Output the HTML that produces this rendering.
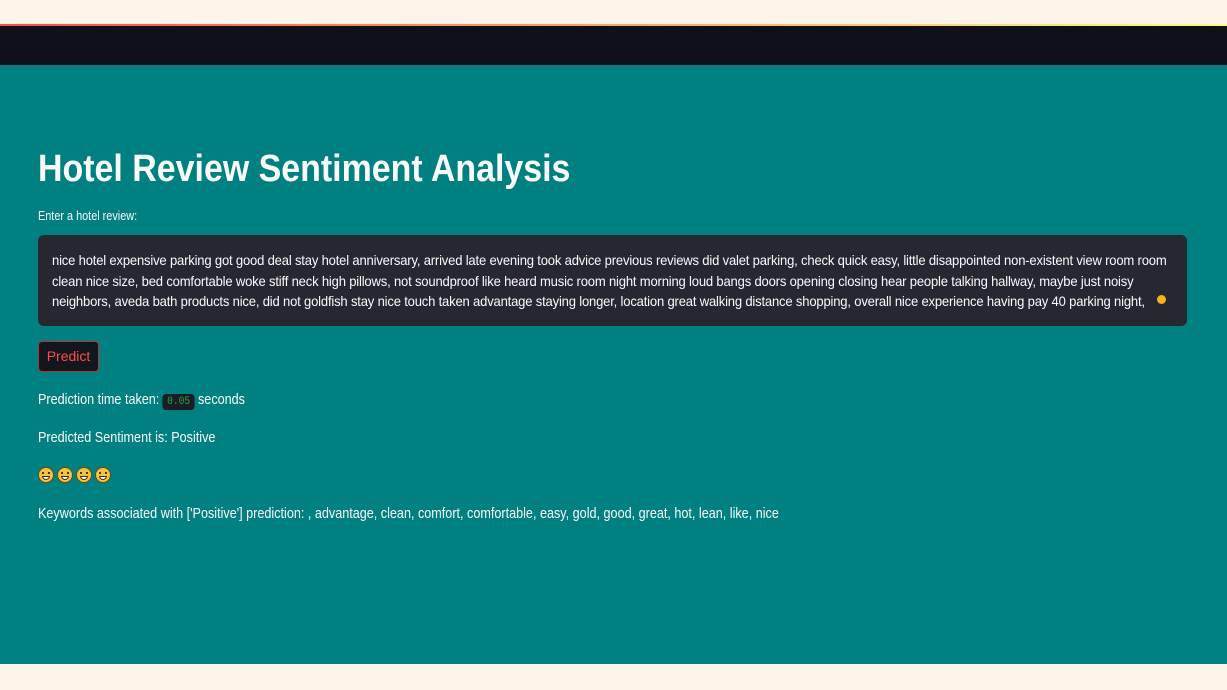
<!DOCTYPE html>
<html><head><meta charset="utf-8"><style>
body{margin:0;width:1227px;height:690px;background:#fef5ea;font-family:"Liberation Sans",sans-serif;overflow:hidden;position:relative}
.top{position:absolute;top:24px;left:0;width:1227px;height:2px;background:linear-gradient(90deg,#ff4b4b,#fffd80)}
.bar{position:absolute;top:26px;left:0;width:1227px;height:39px;background:#0e1117}
.main{position:absolute;top:65px;left:0;width:1227px;height:599px;background:#008080;color:#fafafa}
.s{transform-origin:0 0;white-space:nowrap}
h1{position:absolute;left:38px;top:83px;margin:0;font-size:38px;font-weight:700;transform:scaleX(.893)}
.lbl{position:absolute;left:38px;top:144px;font-size:12.5px;transform:scaleX(.87)}
.ta{position:absolute;left:38px;top:170px;width:1149px;height:91px;background:#262730;border-radius:6px;box-sizing:border-box;padding:15px 14px 0;font-size:14px;line-height:20.5px;letter-spacing:-0.2px}
.ta div{transform:scaleX(.932)}
.dot{position:absolute;right:21px;top:60px;width:9px;height:9px;border-radius:50%;background:#f9b21a}
.btn{position:absolute;left:38px;top:276px;width:61px;height:31px;box-sizing:border-box;border:1px solid #b03535;border-radius:4px;background:#13161d;color:#ff4b4b;font-size:14px;line-height:29px;text-align:center}
.t{position:absolute;left:38px;font-size:14.5px;transform:scaleX(.87)}
code{display:inline-block;background:#1a1d25;color:#28a745;font-family:"Liberation Mono",monospace;font-size:11px;padding:2px 5px;border-radius:4px;vertical-align:0px}
.em{position:absolute;left:38px;top:402px}
.e{display:inline-block;width:16px;height:16px;border-radius:50%;background:#f5c33b;border:1px solid #6a4a10;margin-right:3px;position:relative;box-sizing:border-box}
.e:before{content:"";position:absolute;left:3px;top:4px;width:8px;height:2px;border-left:2px solid #4a300a;border-right:2px solid #4a300a;box-sizing:border-box}
.e:after{content:"";position:absolute;left:3px;top:8px;width:8px;height:4px;background:#fff;border:1px solid #4a300a;border-radius:0 0 5px 5px;box-sizing:border-box}
</style></head><body>
<div class="top"></div><div class="bar"></div>
<div class="main">
<h1 class="s">Hotel Review Sentiment Analysis</h1>
<div class="lbl s">Enter a hotel review:</div>
<div class="ta"><div class="s">nice hotel expensive parking got good deal stay hotel anniversary, arrived late evening took advice previous reviews did valet parking, check quick easy, little disappointed non-existent view room room</div><div class="s">clean nice size, bed comfortable woke stiff neck high pillows, not soundproof like heard music room night morning loud bangs doors opening closing hear people talking hallway, maybe just noisy</div><div class="s">neighbors, aveda bath products nice, did not goldfish stay nice touch taken advantage staying longer, location great walking distance shopping, overall nice experience having pay 40 parking night,</div><span class="dot"></span></div>
<div class="btn">Predict</div>
<div class="t s" style="top:327px">Prediction time taken: <code>0.05</code> seconds</div>
<div class="t s" style="top:365px">Predicted Sentiment is: Positive</div>
<div class="em"><span class="e"></span><span class="e"></span><span class="e"></span><span class="e"></span></div>
<div class="t s" style="top:441px">Keywords associated with ['Positive'] prediction: , advantage, clean, comfort, comfortable, easy, gold, good, great, hot, lean, like, nice</div>
</div>
</body></html>
